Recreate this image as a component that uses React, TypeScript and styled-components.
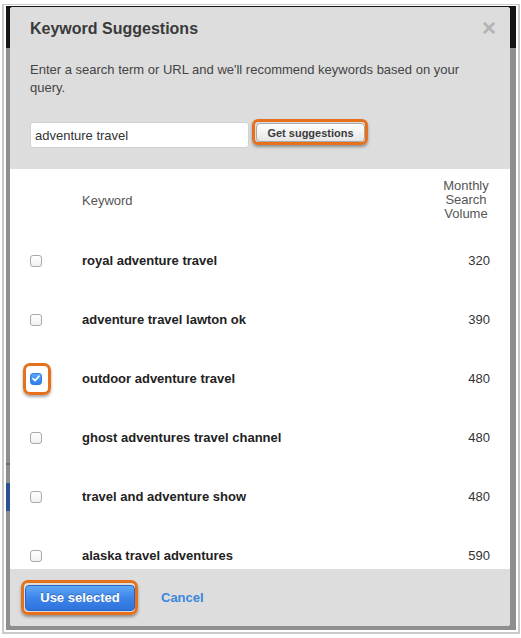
import { useState } from "react";
import styled, { createGlobalStyle } from "styled-components";

const GlobalStyle = createGlobalStyle`
  html, body {
    margin: 0;
    background: #ffffff;
  }
  body {
    font-family: "Liberation Sans", Arial, Helvetica, sans-serif;
    color: #333333;
  }
`;

const ORANGE = "#e5711d";

// white screenshot frame around the dimmed page
const Frame = styled.div`
  margin: 4px 1px 0 2px;
  border: 2px solid #c9c9c9;
  border-top-width: 1px;
  padding: 1px 2px 2px 2px;
  width: 510px;
  height: 624px;
`;

// the page behind the dialog: dark top nav, grey body, a blue nav item peeking out on the left
const Backdrop = styled.div`
  height: 100%;
  box-sizing: border-box;
  display: flex;
  padding: 1px 6px 4px 4px;
  background:
    linear-gradient(
        to bottom,
        transparent 457px,
        #6b6b6b 457px 459px,
        transparent 459px 477px,
        #2d5190 477px 505px,
        transparent 505px
      )
      left top / 4px 100% no-repeat,
    linear-gradient(#151515 0 42px, #8e8e8e 42px);
`;

const Modal = styled.div`
  flex: 1;
  display: flex;
  flex-direction: column;
  border-radius: 3px;
  overflow: hidden;
  background: #ffffff;
`;

const ModalHeader = styled.div`
  background: #dddddd;
  padding: 12px 20px 21px 20px;
`;

const TitleRow = styled.div`
  display: flex;
  align-items: center;
  justify-content: space-between;
`;

const Title = styled.h3`
  margin: 0;
  font-size: 16px;
  line-height: 20px;
  font-weight: bold;
  color: #3a3a3a;
`;

const CloseButton = styled.span`
  margin-right: -6px;
  margin-top: -2px;
  font-size: 24px;
  line-height: 20px;
  font-weight: bold;
  color: #b4b4b4;
  cursor: pointer;
`;

const Intro = styled.p`
  margin: 22px 0 0 0;
  font-size: 13px;
  line-height: 18px;
  color: #444444;
`;

const SearchRow = styled.div`
  display: flex;
  align-items: flex-start;
  gap: 7px;
  margin-top: 25px;
`;

const SearchInput = styled.input`
  box-sizing: border-box;
  width: 219px;
  height: 26px;
  padding: 0 4px;
  border: 1px solid #d2d2d2;
  border-radius: 3px;
  background: #ffffff;
  font-family: inherit;
  font-size: 13px;
  color: #333333;
  outline: none;
`;

// orange callout ring drawn over a control
const Highlight = styled.span<{ $inset: string; $radius: number }>`
  position: relative;
  display: inline-flex;

  &::after {
    content: "";
    position: absolute;
    inset: ${(p) => p.$inset};
    border: 3px solid ${ORANGE};
    border-radius: ${(p) => p.$radius}px;
    box-shadow: 0 2px 3px rgba(0, 0, 0, 0.35);
    pointer-events: none;
  }
`;

const SuggestButton = styled.button`
  margin-top: 1px;
  box-sizing: border-box;
  width: 109px;
  height: 19px;
  padding: 0;
  border: 1px solid #a9a9a9;
  border-radius: 4px;
  background: linear-gradient(#ffffff, #e6e6e6);
  font-family: inherit;
  font-size: 11px;
  font-weight: bold;
  color: #3c3c3c;
  cursor: pointer;
`;

const Results = styled.div`
  height: 400px;
  overflow: hidden;
  background: #ffffff;
  padding: 0 20px;
`;

const Grid = styled.div`
  display: grid;
  grid-template-columns: 52px 1fr 48px;
  align-items: center;
`;

const HeaderRow = styled(Grid)`
  height: 62px;
  font-size: 13px;
  color: #555555;
`;

const VolumeHeading = styled.span`
  text-align: center;
  line-height: 14px;
  white-space: pre-line;
`;

const KeywordRow = styled(Grid)`
  height: 59px;
`;

const Keyword = styled.span`
  font-size: 13px;
  font-weight: bold;
  color: #222222;
`;

const Volume = styled.span`
  text-align: right;
  font-size: 13px;
  color: #333333;
`;

const CheckCell = styled.span`
  display: flex;
  align-items: center;
`;

const Box = styled.span<{ $checked: boolean }>`
  box-sizing: border-box;
  width: 12px;
  height: 12px;
  border-radius: 3px;
  display: flex;
  align-items: center;
  justify-content: center;
  cursor: pointer;
  border: 1px solid ${(p) => (p.$checked ? "#2f7de0" : "#a8a8a8")};
  background: ${(p) => (p.$checked ? "linear-gradient(#5aa5fb, #2f80ec)" : "linear-gradient(#ffffff, #f1f1f1)")};
`;

const ModalFooter = styled.div`
  flex: 1;
  display: flex;
  align-items: center;
  gap: 26px;
  padding: 0 15px;
  background: #dddddd;
`;

const PrimaryButton = styled.button`
  box-sizing: border-box;
  width: 110px;
  height: 26px;
  padding: 0;
  border: 1px solid #2a64c0;
  border-radius: 4px;
  background: linear-gradient(#62a8f6, #3b84ea 50%, #2f72dc);
  font-family: inherit;
  font-size: 13px;
  font-weight: bold;
  color: #ffffff;
  text-shadow: 0 -1px 0 rgba(0, 0, 0, 0.25);
  cursor: pointer;
`;

const CancelLink = styled.a`
  font-size: 13px;
  font-weight: bold;
  color: #3a87dc;
  text-decoration: none;
  cursor: pointer;
`;

interface Suggestion {
  keyword: string;
  volume: number;
}

const suggestions: Suggestion[] = [
  { keyword: "royal adventure travel", volume: 320 },
  { keyword: "adventure travel lawton ok", volume: 390 },
  { keyword: "outdoor adventure travel", volume: 480 },
  { keyword: "ghost adventures travel channel", volume: 480 },
  { keyword: "travel and adventure show", volume: 480 },
  { keyword: "alaska travel adventures", volume: 590 },
];

const Checkbox = ({ checked, onToggle }: { checked: boolean; onToggle: () => void }) => (
  <Box $checked={checked} onClick={onToggle}>
    {checked && (
      <svg width="8" height="7" viewBox="0 0 8 7">
        <path d="M1 3.6 L3.1 5.6 L7 1.2" fill="none" stroke="#ffffff" strokeWidth="1.6" strokeLinecap="round" strokeLinejoin="round" />
      </svg>
    )}
  </Box>
);

const App = () => {
  const [query, setQuery] = useState("adventure travel");
  const [selected, setSelected] = useState<string[]>(["outdoor adventure travel"]);

  const toggle = (keyword: string) =>
    setSelected((prev) => (prev.includes(keyword) ? prev.filter((k) => k !== keyword) : [...prev, keyword]));

  return (
    <>
      <GlobalStyle />
      <Frame>
        <Backdrop>
          <Modal>
            <ModalHeader>
              <TitleRow>
                <Title>Keyword Suggestions</Title>
                <CloseButton>×</CloseButton>
              </TitleRow>
              <Intro>Enter a search term or URL and we'll recommend keywords based on your query.</Intro>
              <SearchRow>
                <SearchInput value={query} onChange={(e) => setQuery(e.target.value)} />
                <Highlight $inset="-3px -3px -3px -4px" $radius={6}>
                  <SuggestButton>Get suggestions</SuggestButton>
                </Highlight>
              </SearchRow>
            </ModalHeader>

            <Results>
              <HeaderRow>
                <span />
                <span>Keyword</span>
                <VolumeHeading>{"Monthly\nSearch\nVolume"}</VolumeHeading>
              </HeaderRow>
              {suggestions.map((s) => {
                const checked = selected.includes(s.keyword);
                const box = <Checkbox checked={checked} onToggle={() => toggle(s.keyword)} />;
                return (
                  <KeywordRow key={s.keyword}>
                    <CheckCell>
                      {checked ? (
                        <Highlight $inset="-10px -9px -10px -7px" $radius={7}>
                          {box}
                        </Highlight>
                      ) : (
                        box
                      )}
                    </CheckCell>
                    <Keyword>{s.keyword}</Keyword>
                    <Volume>{s.volume}</Volume>
                  </KeywordRow>
                );
              })}
            </Results>

            <ModalFooter>
              <Highlight $inset="-5px -3px -4px -4px" $radius={7}>
                <PrimaryButton>Use selected</PrimaryButton>
              </Highlight>
              <CancelLink>Cancel</CancelLink>
            </ModalFooter>
          </Modal>
        </Backdrop>
      </Frame>
    </>
  );
};

export default App;
